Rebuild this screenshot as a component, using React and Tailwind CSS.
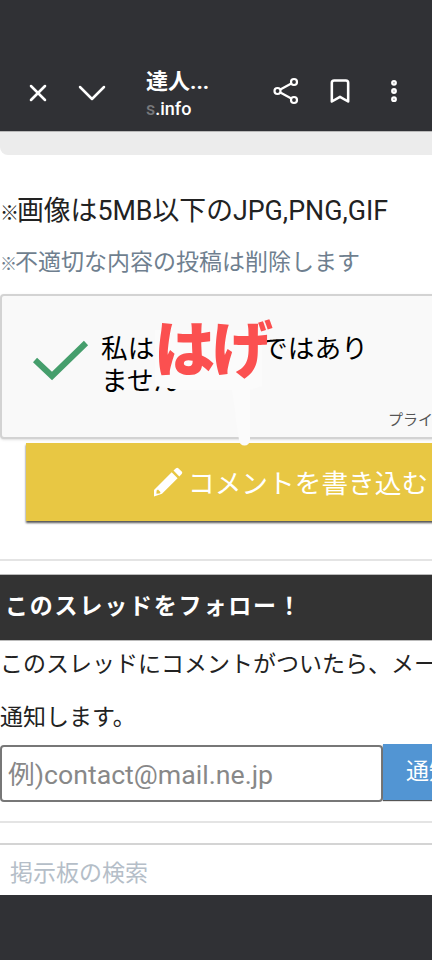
import React from 'react';
import { X, ChevronDown, Bookmark, MoreVertical } from 'lucide-react';

const font = "font-['Roboto','Noto_Sans_CJK_JP',sans-serif]";

function ShareIcon() {
  return (
    <svg width="26" height="28" viewBox="0 0 26 28" fill="none" stroke="white" strokeWidth="2.2">
      <circle cx="21" cy="5" r="3" />
      <circle cx="4.5" cy="14" r="3" />
      <circle cx="21" cy="23" r="3" />
      <path d="M7.3 12.5 18.3 6.5M7.3 15.5 18.3 21.5" />
    </svg>
  );
}

function PencilIcon() {
  return (
    <svg width="30" height="30" viewBox="0 0 30 30" fill="white">
      <path d="M20.5 3.5 23 1.2c.8-.7 1.6-.7 2.3 0l3.4 3.4c.7.7.7 1.6 0 2.3L26.3 9.4Z" />
      <path d="M18.7 5.3 24.6 11.2 9 26.8 1 29.4 1 22.9ZM3.6 23.5 3.4 26.8 6.6 26.6 7.6 25.2 5 22.6Z" fillRule="evenodd" />
    </svg>
  );
}

function Header() {
  return (
    <div className="h-[132px] shrink-0 bg-[#303135] border-b border-[#b9b9b9] flex items-end pb-[16px] text-white">
      <div className="w-[76px] h-[44px] flex items-center justify-center">
        <X size={28} strokeWidth={2.2} />
      </div>
      <div className="w-[32px] h-[44px] flex items-center justify-center">
        <ChevronDown size={48} strokeWidth={1.25} className="shrink-0" />
      </div>
      <div className="ml-[38px] w-[110px] flex flex-col -mb-[6px]">
        <span className="text-[22px] leading-[30px] font-bold">達人...</span>
        <span className="text-[18px] leading-[24px] font-medium">
          <span className="text-[#77787b]">s</span>.info
        </span>
      </div>
      <div className="ml-[13px] w-[34px] h-[48px] flex items-center justify-center">
        <ShareIcon />
      </div>
      <div className="ml-[20px] w-[34px] h-[48px] flex items-center justify-center">
        <Bookmark size={28} strokeWidth={2.2} />
      </div>
      <div className="ml-[20px] w-[34px] h-[48px] flex items-center justify-center">
        <MoreVertical size={28} strokeWidth={3} />
      </div>
    </div>
  );
}

function Captcha() {
  return (
    <div className="relative h-[145px] w-[480px] shrink-0 bg-[#f9f9f9] border-2 border-[#d3d3d3] rounded-[4px] shadow-sm">
      <svg className="absolute left-[31px] top-[42px]" width="56" height="44" viewBox="0 0 56 44" fill="none" stroke="#459e6c" strokeWidth="6">
        <path d="M2 22 19 38 53 5" />
      </svg>
      <p className="absolute left-[99px] top-[37px] w-[280px] text-[26.7px] leading-[32px] text-black">
        私はロボットではありません
      </p>
      <span className="absolute left-[386px] bottom-[8px] text-[15px] leading-[18px] text-[#555] whitespace-nowrap">プライバシー</span>
    </div>
  );
}

export default function App() {
  return (
    <div className={`relative w-[432px] h-[960px] overflow-hidden bg-white flex flex-col ${font}`}>
      <Header />
      <div className="h-[23px] shrink-0 bg-[#ececec] rounded-bl-[8px]" />

      <p className="mt-[40px] h-[32px] text-[26.8px] leading-[32px] text-[#222] whitespace-nowrap">
        <span className="inline-block w-[17px] text-center text-[19px] leading-none font-bold">※</span>画像は5MB以下のJPG,PNG,GIF
      </p>
      <p className="mt-[20px] h-[32px] text-[23px] leading-[32px] text-[#6f7f8f] whitespace-nowrap">
        <span className="inline-block w-[15px] text-center text-[17px] leading-none font-medium">※</span>不適切な内容の投稿は削除します
      </p>

      <div className="mt-[15px]">
        <Captcha />
      </div>

      <div className="mt-[4px] ml-[26px] h-[78px] w-[480px] shrink-0 bg-[#e8c743] shadow-[0_2px_2px_#555] flex items-center pl-[127px] text-[26.7px] text-white whitespace-nowrap gap-[5px]">
        <PencilIcon />
        <span className="mt-[4px]">コメントを書き込む</span>
      </div>

      <div className="mt-[38px] h-[2px] shrink-0 bg-[#e4e4e4]" />

      <div className="mt-[13px] h-[67px] shrink-0 bg-[#333333] border-y border-[#bbb] flex items-center pl-[5px] text-[23px] font-bold tracking-[1.8px] text-white whitespace-nowrap">
        このスレッドをフォロー！
      </div>

      <p className="mt-[8px] text-[23px] leading-[32px] text-[#222] whitespace-nowrap">このスレッドにコメントがついたら、メールで</p>
      <p className="mt-[21px] text-[23px] leading-[32px] text-[#222] whitespace-nowrap">通知します。</p>

      <div className="mt-[10px] flex items-start shrink-0">
        <div className="mt-[1px] w-[383px] h-[57px] shrink-0 border-2 border-[#777] rounded-[4px] bg-white flex items-center pl-[6px] text-[26.7px] text-[#888] whitespace-nowrap">
          <span className="mt-[3px]">例)contact@mail.ne.jp</span>
        </div>
        <div className="w-[80px] h-[56px] shrink-0 bg-[#5295d3] shadow-[0_1px_1px_#555] flex items-center pl-[23px] text-[23px] text-white whitespace-nowrap">
          通知
        </div>
      </div>

      <div className="mt-[19px] h-[2px] shrink-0 bg-[#e4e4e4]" />
      <div className="mt-[20px] h-[2px] shrink-0 bg-[#d4d4d4]" />
      <p className="mt-[14px] pl-[10px] text-[23px] leading-[30px] text-[#b5bec8] whitespace-nowrap">掲示板の検索</p>

      <div className="mt-[6px] flex-1 bg-[#303135]" />

      {/* 上に載っているスタンプ文字と、その下のにじみ */}
      <svg className="absolute left-[150px] top-[318px]" width="120" height="130" viewBox="0 0 120 130">
        <path d="M5 12H112V68L100 72V122a5.5 5.5 0 0 1-11 0L82 72H30L5 68Z" fill="#fbfbfb" />
      </svg>
      <div className="absolute left-[154px] top-[316px] text-[61px] leading-[70px] font-black text-[#fb5050] whitespace-nowrap tracking-[-3px]">
        はげ
      </div>
    </div>
  );
}
